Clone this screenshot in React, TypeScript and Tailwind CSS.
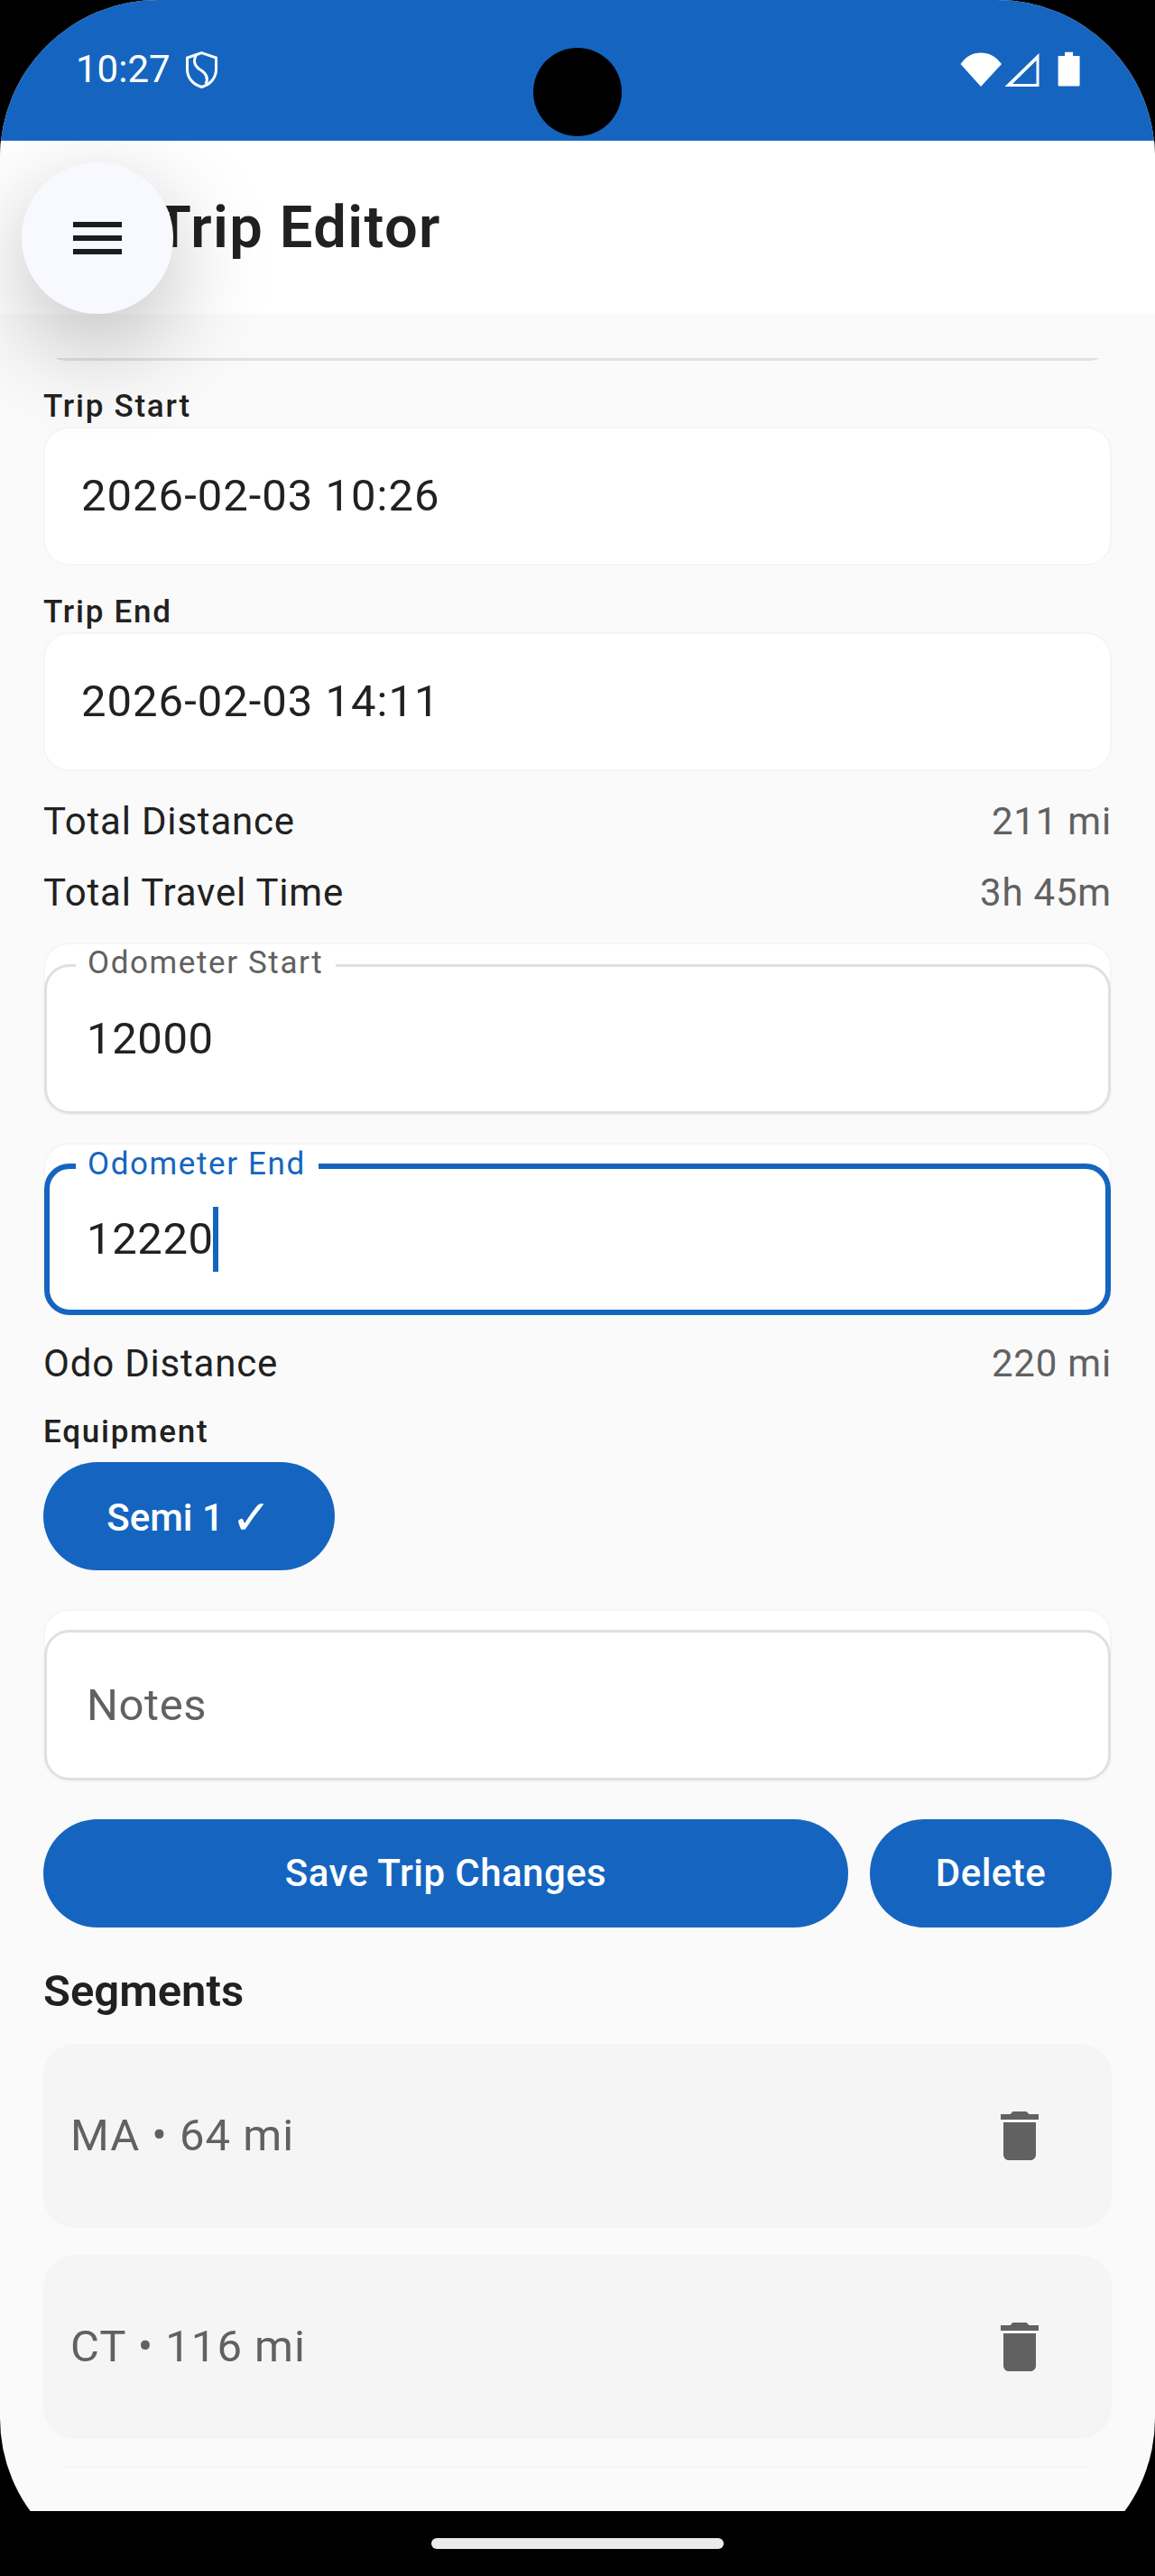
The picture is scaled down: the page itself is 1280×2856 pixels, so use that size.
import React from 'react';

const ROBOTO = { fontFamily: 'Roboto, sans-serif' };

function StatusBar() {
  return (
    <div className="relative z-30 h-[156px] shrink-0 bg-[#1565c0] flex items-start text-white">
      <span className="ml-[84px] mt-[47px] text-[42px] leading-[60px]">10:27</span>
      <svg className="ml-[17px] mt-[57px]" width="35" height="41" viewBox="0 0 35 41" fill="none" stroke="white" strokeWidth="3">
        <path d="M17.500 1.700 33.500 7v13c0 9.500-6.500 16.500-16 19.500C8 36.500 1.500 29.500 1.500 20V7z" />
        <path d="M12 3C7 11 10 17 17 21c6 4 8 9 5 15" />
      </svg>
      <div className="absolute left-[591px] top-[53px] h-[98px] w-[98px] rounded-full bg-black" />
      <svg className="absolute left-[1064px] top-[57px]" width="134" height="41" viewBox="0 0 134 41" fill="white">
        <path d="M0.500 14C7 5 14 1.500 23 1.500S39 5 46 14L23 39z" />
        <path fillRule="evenodd" d="M49.500 39 87.500 2v37zM58 36h26.500V10z" />
        <path d="M108.600 6c0-.6.400-1 1-1h6.500V.700h9V5h6.500c.6 0 1 .4 1 1v31c0 1-.8 1.600-1.600 1.600h-20.800c-.8 0-1.600-.6-1.600-1.600z" />
      </svg>
    </div>
  );
}

function AppBar() {
  return (
    <div className="relative z-10 h-[192px] shrink-0 bg-white flex items-center pl-[172px]">
      <span className="text-[65px] leading-[74px] font-semibold tracking-[1.4px] text-[#212121]">Trip Editor</span>
    </div>
  );
}

function MenuButton() {
  return (
    <div className="absolute z-20 left-[24px] top-[180px] flex h-[168px] w-[168px] items-center justify-center rounded-full bg-[#f8f8ff] shadow-[0_35px_110px_rgba(0,0,0,0.26)]">
      <svg width="72" height="72" viewBox="0 0 24 24" fill="#1a1c20">
        <path d="M3 18h18v-2H3v2zm0-5h18v-2H3v2zm0-7v2h18V6H3z" />
      </svg>
    </div>
  );
}

function FieldLabel({ children, className }: { children: React.ReactNode; className: string }) {
  return <div className={`h-[42px] text-[35px] leading-[42px] font-medium tracking-[1.75px] text-[#212121] ${className}`}>{children}</div>;
}

function DateField({ value }: { value: string }) {
  return (
    <div className="mt-[2px] flex h-[154px] items-center rounded-[28px] border-2 border-[#f5f5f5] bg-white pl-[40px] text-[49px] leading-[56px] tracking-[1px] text-[#212121]">
      {value}
    </div>
  );
}

function InfoRow({ label, value, className }: { label: string; value: string; className: string }) {
  return (
    <div className={`flex h-[50px] items-center justify-between text-[42px] leading-[50px] tracking-[0.8px] ${className}`}>
      <span className="text-[#212121]">{label}</span>
      <span className="text-[#616161]">{value}</span>
    </div>
  );
}

function OutlinedField({ label, value }: { label: string; value: string }) {
  return (
    <div className="mt-[30px] h-[192px] rounded-[28px] border-2 border-[#f5f5f5] bg-white">
      <div className="relative mx-[-1px] mt-[22px] flex h-[166px] items-center rounded-[28px] border-[3px] border-[#e0e0e0] pl-[44px] text-[49px] leading-[60px] tracking-[0.6px] text-[#212121]">
        <span className="absolute left-[32px] top-[-25px] h-[30px] bg-white pl-[13px] pr-[14px] text-[35px] leading-[42px] tracking-[1.6px] text-[#616161]">{label}</span>
        {value}
      </div>
    </div>
  );
}

function FocusedField({ label, value }: { label: string; value: string }) {
  return (
    <div className="mt-[30px] h-[192px] rounded-[28px] border-2 border-[#f5f5f5] bg-white">
      <div className="relative mx-[-1px] mt-[21px] flex h-[168px] items-center rounded-[28px] border-[6px] border-[#1565c0] pl-[41px] text-[49px] leading-[60px] tracking-[0.6px] text-[#212121]">
        <span className="absolute left-[29px] top-[-26px] h-[33px] bg-white pl-[13px] pr-[14px] text-[35px] leading-[42px] tracking-[1.6px] text-[#1565c0]">{label}</span>
        {value}
        <span className="ml-[-1px] h-[72px] w-[6px] bg-[#1565c0]" />
      </div>
    </div>
  );
}

function SegmentCard({ text }: { text: string }) {
  return (
    <div className="mb-[30px] flex h-[204px] items-center justify-between rounded-[35px] bg-[#f5f5f5] pl-[30px] pr-[66px] text-[49px] leading-[60px] tracking-[1px] text-[#616161]">
      <span>{text}</span>
      <svg width="72" height="72" viewBox="0 0 24 24" fill="#616161">
        <path d="M6 19c0 1.100.9 2 2 2h8c1.100 0 2-.9 2-2V7H6v12zM19 4h-3.500l-1-1h-5l-1 1H5v2h14V4z" />
      </svg>
    </div>
  );
}

// only the bottom or top edge of the cards scrolled out of view is visible
function ClippedEdge({ className, inner }: { className: string; inner: string }) {
  return (
    <div className={`overflow-hidden ${className}`}>
      <div className={inner} />
    </div>
  );
}

export default function App() {
  return (
    <div className="relative h-[2856px] w-[1280px] overflow-hidden bg-black" style={ROBOTO}>
      <div className="relative flex h-[2856px] flex-col overflow-hidden rounded-[175px] bg-[#fafafa]">
        <StatusBar />
        <AppBar />
        <MenuButton />
        <div className="flex flex-col px-[48px]">
          <ClippedEdge
            className="mt-[49px] flex h-[3px] items-end"
            inner="h-[80px] w-full shrink-0 rounded-[25px] border-[3px] border-[#e0e0e0]"
          />
          <FieldLabel className="mt-[29px] pt-[1px]">Trip Start</FieldLabel>
          <DateField value="2026-02-03 10:26" />
          <FieldLabel className="mt-[30px] pt-[1px]">Trip End</FieldLabel>
          <DateField value="2026-02-03 14:11" />
          <InfoRow className="mt-[31px]" label="Total Distance" value="211 mi" />
          <InfoRow className="mt-[29px]" label="Total Travel Time" value="3h 45m" />
          <OutlinedField label="Odometer Start" value="12000" />
          <FocusedField label="Odometer End" value="12220" />
          <InfoRow className="mt-[28px]" label="Odo Distance" value="220 mi" />
          <FieldLabel className="mt-[30px]">Equipment</FieldLabel>
          <div className="mt-[12px] flex h-[120px] w-[323px] items-center justify-center gap-[8px] rounded-full bg-[#1565c0] pt-[3px] text-[42px] leading-[50px] font-medium text-white">
            <span>Semi 1</span>
            <span className="text-[54px] leading-[50px] font-normal">✓</span>
          </div>
          <div className="mt-[43px] h-[192px] rounded-[28px] border-2 border-[#f5f5f5] bg-white">
            <div className="mx-[-1px] mt-[21px] flex h-[167px] items-center rounded-[28px] border-[3px] border-[#e0e0e0] pl-[44px] text-[49px] leading-[60px] tracking-[0.6px] text-[#616161]">
              Notes
            </div>
          </div>
          <div className="mt-[41px] flex gap-[24px] text-[42px] leading-[50px] font-medium tracking-[0.45px] text-white">
            <div className="flex h-[120px] flex-1 items-center justify-center rounded-full bg-[#1565c0]">Save Trip Changes</div>
            <div className="flex h-[120px] w-[268px] items-center justify-center rounded-full bg-[#1565c0]">Delete</div>
          </div>
          <div className="mt-[41px] mb-[28px] text-[49px] leading-[60px] font-semibold text-[#212121]">Segments</div>
          <SegmentCard text="MA • 64 mi" />
          <SegmentCard text="CT • 116 mi" />
          <ClippedEdge
            className="flex h-[2px] items-start"
            inner="h-[80px] w-full shrink-0 rounded-[28px] border-2 border-[#f5f5f5]"
          />
        </div>
      </div>
      <div className="absolute bottom-0 left-0 flex h-[72px] w-full justify-center bg-black pt-[30px]">
        <div className="h-[12px] w-[324px] rounded-[6px] bg-[#ebebeb]" />
      </div>
    </div>
  );
}
